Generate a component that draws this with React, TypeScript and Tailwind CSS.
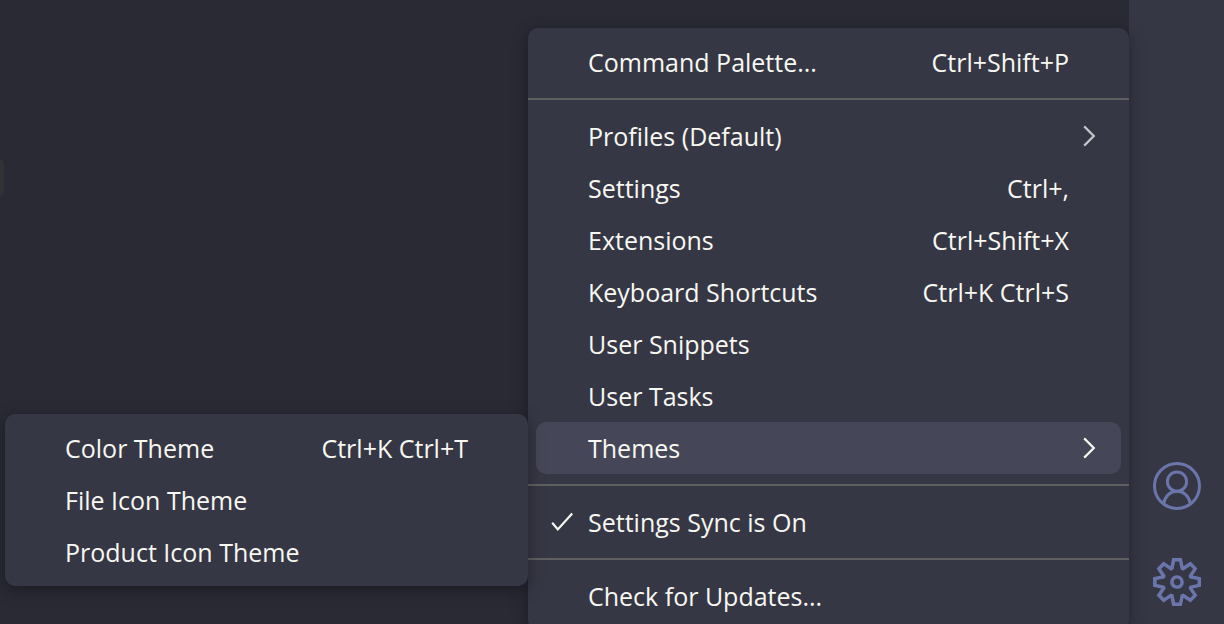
import { VscSettingsGear } from "react-icons/vsc";

type Item = {
  label: string;
  shortcut?: string;
  checked?: boolean;
  submenu?: Item[];
  open?: boolean;
};

const groups: Item[][] = [
  [{ label: "Command Palette...", shortcut: "Ctrl+Shift+P" }],
  [
    { label: "Profiles (Default)", submenu: [] },
    { label: "Settings", shortcut: "Ctrl+," },
    { label: "Extensions", shortcut: "Ctrl+Shift+X" },
    { label: "Keyboard Shortcuts", shortcut: "Ctrl+K Ctrl+S" },
    { label: "User Snippets" },
    { label: "User Tasks" },
    {
      label: "Themes",
      open: true,
      submenu: [
        { label: "Color Theme", shortcut: "Ctrl+K Ctrl+T" },
        { label: "File Icon Theme" },
        { label: "Product Icon Theme" },
      ],
    },
  ],
  [{ label: "Settings Sync is On", checked: true }],
  [{ label: "Check for Updates..." }],
];

function CheckMark() {
  return (
    <svg viewBox="0 0 24 24" className="size-6" fill="none" stroke="currentColor" strokeWidth="2.2" aria-hidden="true">
      <path d="M2.2 12.8 7.8 19.4 22.2 3.4" />
    </svg>
  );
}

function Chevron({ dim }: { dim: boolean }) {
  return (
    <svg
      viewBox="0 0 32 32"
      className={`mr-4 size-8 ${dim ? "text-[#c4c5c8]" : ""}`}
      fill="none"
      stroke="currentColor"
      strokeWidth="2.2"
      aria-hidden="true"
    >
      <path d="M11.2 6.4 20.8 16l-9.6 9.6" />
    </svg>
  );
}

function AccountIcon() {
  return (
    <svg viewBox="0 0 48 48" className="size-12" fill="none" stroke="currentColor" strokeWidth="3" aria-hidden="true">
      <circle cx="24" cy="24" r="22.5" />
      <circle cx="24" cy="19.6" r="9.6" />
      <path d="M10.6 41.6C12 34.2 17.3 29.3 24 29.3s12 4.9 13.4 12.3" />
    </svg>
  );
}

function MenuRow({ item }: { item: Item }) {
  return (
    <li role="none" className="relative px-2">
      <button
        type="button"
        role={item.checked ? "menuitemcheckbox" : "menuitem"}
        aria-checked={item.checked}
        aria-haspopup={item.submenu ? "menu" : undefined}
        aria-expanded={item.submenu ? !!item.open : undefined}
        className={`flex h-13 w-full items-center rounded-[10px] text-left ${item.open ? "bg-[#454758]" : ""}`}
      >
        <span className="flex w-13 shrink-0 justify-center">{item.checked && <CheckMark />}</span>
        <span className="flex-1 whitespace-nowrap">{item.label}</span>
        {item.shortcut && <span className="mr-13 whitespace-nowrap">{item.shortcut}</span>}
        {item.submenu && <Chevron dim={!item.open} />}
      </button>
      {item.open && item.submenu && (
        <ul
          role="menu"
          aria-label={item.label}
          className="absolute right-full -top-2 w-[523px] rounded-[10px] bg-[#363744] py-2 shadow-[0_4px_16px_rgba(0,0,0,0.36)]"
        >
          {item.submenu.map((child) => (
            <MenuRow key={child.label} item={child} />
          ))}
        </ul>
      )}
    </li>
  );
}

export default function App() {
  return (
    <div className="relative flex h-screen overflow-hidden bg-[#2a2a35] font-['Open_Sans','Noto_Sans',sans-serif] text-[25px] leading-8 text-[#f8f8f2]">
      <main className="flex-1">
        <div className="absolute top-40 left-0 h-9 w-1 rounded-r-md bg-[#323236]" />
      </main>
      <nav aria-label="Manage" className="flex w-[95px] flex-col justify-end gap-12 bg-[#363744] pb-[18px] pl-6 text-[#6a76ab]">
        <button type="button" aria-label="Accounts" className="size-12">
          <AccountIcon />
        </button>
        <button type="button" aria-label="Manage" className="size-12">
          <VscSettingsGear className="size-12" />
        </button>
      </nav>
      <div
        role="menu"
        aria-label="Manage"
        className="absolute top-7 right-[95px] w-[601px] rounded-[10px] bg-[#363744] py-2 shadow-[0_4px_16px_rgba(0,0,0,0.36)]"
      >
        {groups.map((group, index) => (
          <ul
            key={group[0].label}
            role="group"
            className={index > 0 ? "mt-[10px] border-t-2 border-[#606060] pt-[10px]" : ""}
          >
            {group.map((item) => (
              <MenuRow key={item.label} item={item} />
            ))}
          </ul>
        ))}
      </div>
    </div>
  );
}
